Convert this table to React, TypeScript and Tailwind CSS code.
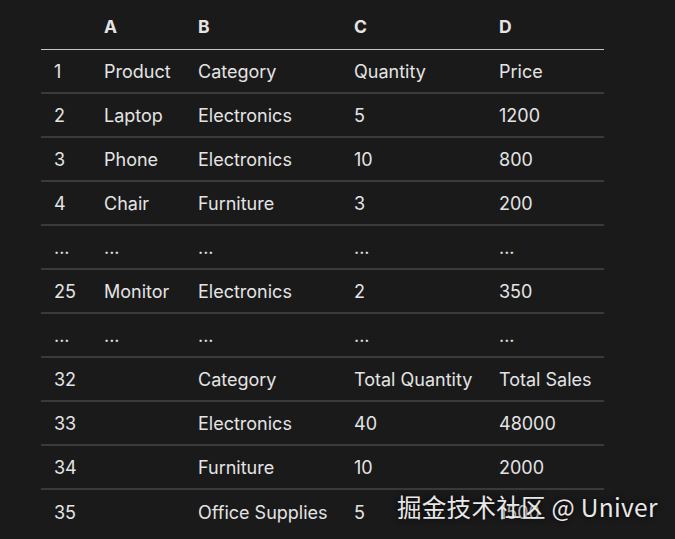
import React from "react";

const rows: string[][] = [
  ["1", "Product", "Category", "Quantity", "Price"],
  ["2", "Laptop", "Electronics", "5", "1200"],
  ["3", "Phone", "Electronics", "10", "800"],
  ["4", "Chair", "Furniture", "3", "200"],
  ["...", "...", "...", "...", "..."],
  ["25", "Monitor", "Electronics", "2", "350"],
  ["...", "...", "...", "...", "..."],
  ["32", "", "Category", "Total Quantity", "Total Sales"],
  ["33", "", "Electronics", "40", "48000"],
  ["34", "", "Furniture", "10", "2000"],
  ["35", "", "Office Supplies", "5", "1500"],
];

const cols = "grid grid-cols-[50px_94px_156px_145px_118px]";

export default function App() {
  return (
    <div
      className="relative w-[675px] h-[539px] overflow-hidden bg-[#1a1a1a] text-[#e4e4e4]"
      style={{ fontFamily: "Inter, 'Noto Sans', sans-serif" }}
    >
      <div className="ml-[41px] w-[563px]">
        <div className={`${cols} h-[50px] items-center border-b border-[#c4c4c4] text-[17.5px] font-bold`}>
          <div className="pl-[13px] pt-[5px]"></div>
          <div className="pl-[13px] pt-[5px]">A</div>
          <div className="pl-[13px] pt-[5px]">B</div>
          <div className="pl-[13px] pt-[5px]">C</div>
          <div className="pl-[13px] pt-[5px]">D</div>
        </div>
        {rows.map((r, i) => (
          <div
            key={i}
            className={`${cols} h-[44px] items-center text-[18px] ${
              i < rows.length - 1 ? "border-b-2 border-[#3a3a3a]" : ""
            }`}
          >
            {r.map((c, j) => (
              <div key={j} className="pl-[13px] pt-[1px] whitespace-nowrap">
                {c}
              </div>
            ))}
          </div>
        ))}
      </div>
      <div
        className="absolute left-[397px] top-[491px] text-[24.5px] leading-[32px] tracking-[0.3px] text-[#e8e8e8] whitespace-nowrap [text-shadow:0_0_6px_rgba(0,0,0,0.95)]"
        style={{ fontFamily: "'Noto Sans CJK SC', 'Noto Sans', sans-serif" }}
      >
        掘金技术社区 @ Univer
      </div>
    </div>
  );
}
